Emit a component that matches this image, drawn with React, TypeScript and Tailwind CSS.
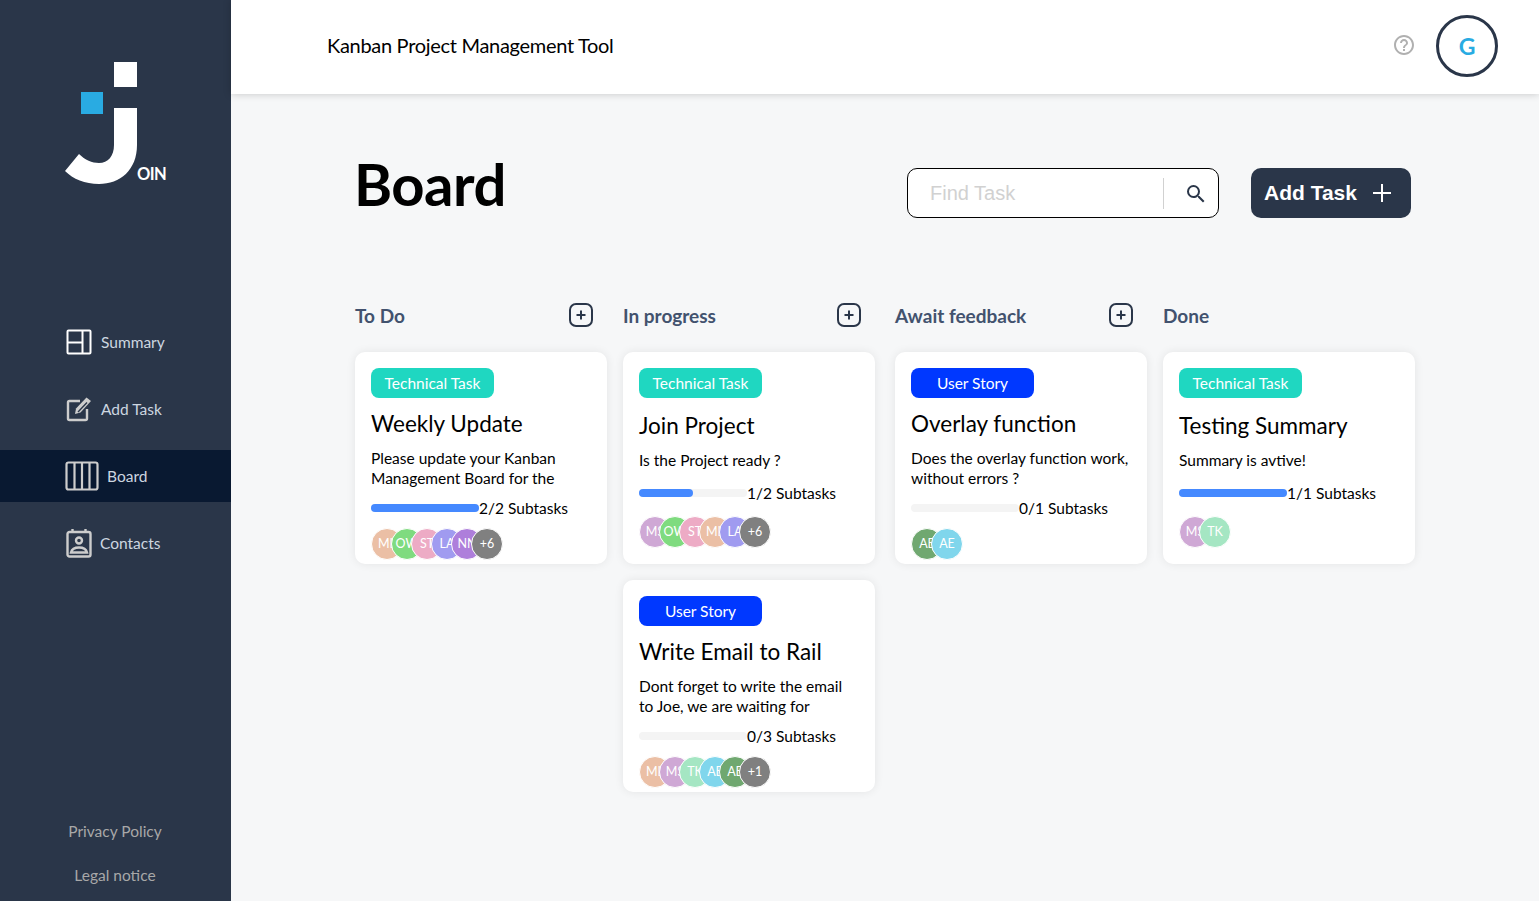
const FONT = "font-['Lato','Noto_Sans',sans-serif]";

type Person = { label: string; color: string };

const ML = { label: "ML", color: "bg-[#ebbfa5]" };
const OW = { label: "OW", color: "bg-[#7fdb7f]" };
const ST = { label: "ST", color: "bg-[#edabc5]" };
const LA = { label: "LA", color: "bg-[#a09bf0]" };
const NN = { label: "NN", color: "bg-[#ae7edb]" };
const MS = { label: "MS", color: "bg-[#cfa8d5]" };
const TK = { label: "TK", color: "bg-[#a5e6c3]" };
const AB = { label: "AE", color: "bg-[#80d6ec]" };
const AG = { label: "AE", color: "bg-[#70a870]" };
const more = (n: number) => ({ label: "+" + n, color: "bg-[#808080]" });

const Logo = () => (
  <svg width="110" height="130" viewBox="60 58 110 130" className="block">
    <rect x="114" y="62" width="23" height="25" fill="#fff" />
    <rect x="81" y="92" width="22" height="22" fill="#29abe2" />
    <path
      d="M114 108H137V145C137 170 120 184 99 184C85 184 73 179 65 171L79 154C85 160 92 163 99 163C108 163 114 156 114 145Z"
      fill="#fff"
    />
  </svg>
);

const SummaryIcon = () => (
  <svg width="26" height="26" viewBox="0 0 26 26" fill="none" stroke="#fff" strokeWidth="2">
    <rect x="1.5" y="1.5" width="23" height="23" rx="1" />
    <path d="M16.5 1.5V24.5M1.5 13.5H16.5" />
  </svg>
);

const AddTaskIcon = () => (
  <svg width="26" height="26" viewBox="0 0 26 26" fill="none" stroke="#cdcdcd" strokeWidth="2.4">
    <path d="M14 5H3.5A1.5 1.5 0 0 0 2 6.5V22.5A1.5 1.5 0 0 0 3.5 24H19.5A1.5 1.5 0 0 0 21 22.5V13" />
    <path d="M9 18L10 12.5L20.5 1.5L25 5L14.5 16.5Z" fill="#cdcdcd" stroke="none" />
    <path d="M11.5 15.5L20.5 6L21.5 7L12.5 16.5Z" fill="#2a3649" stroke="none" />
  </svg>
);

const BoardIcon = () => (
  <svg width="34" height="30" viewBox="0 0 34 30" fill="none" stroke="#cdcdcd" strokeWidth="2.2">
    <rect x="1.5" y="1.5" width="31" height="27" rx="2" />
    <path d="M9.5 1.5V28.5M17 1.5V28.5M24.5 1.5V28.5" />
  </svg>
);

const ContactsIcon = () => (
  <svg width="26" height="30" viewBox="0 0 26 30" fill="none" stroke="#cdcdcd" strokeWidth="2.4">
    <rect x="1.5" y="4" width="23" height="24.5" rx="2" />
    <path d="M6.5 1V4M19.5 1V4" />
    <circle cx="13" cy="12.5" r="3" />
    <path d="M5 24.5C6 20.5 9 19.5 13 19.5S20 20.5 21 24.5Z" />
  </svg>
);

const PlusBox = () => (
  <svg width="24" height="24" viewBox="0 0 24 24" fill="none" stroke="#2a3649" strokeWidth="2" className="shrink-0">
    <rect x="1" y="1" width="22" height="22" rx="6" />
    <path d="M12 7.5V16.5M7.5 12H16.5" />
  </svg>
);

const NavItem = ({ icon, label, left, gap, active }: { icon: React.ReactNode; label: string; left: string; gap: string; active?: boolean }) => (
  <div className={`flex h-[52px] items-center ${left} ${gap} ${active ? "bg-[#091931]" : ""}`}>
    {icon}
    <span className="pt-[2px] text-[15.5px] text-[#cdd6e0]">{label}</span>
  </div>
);

const Sidebar = () => (
  <aside className="flex h-full w-[231px] shrink-0 flex-col bg-[#2a3649]">
    <div className="relative ml-[60px] mt-[58px] h-[130px] w-[110px]">
      <Logo />
      <span className="absolute left-[77px] top-[104px] text-[16.5px] font-bold leading-6 tracking-[-0.6px] text-white">OIN</span>
    </div>
    <nav className="mt-[128px] flex flex-col gap-[15px]">
      <NavItem icon={<SummaryIcon />} label="Summary" left="pl-[66px]" gap="gap-[9px]" />
      <NavItem icon={<AddTaskIcon />} label="Add Task" left="pl-[66px]" gap="gap-[9px]" />
      <NavItem icon={<BoardIcon />} label="Board" left="pl-[65px]" gap="gap-[8px]" active />
      <NavItem icon={<ContactsIcon />} label="Contacts" left="pl-[66px]" gap="gap-[8px]" />
    </nav>
    <div className="mt-auto flex flex-col items-center gap-[22px] pb-[15px] pr-[1px] text-[15.5px] leading-[22px] text-[#a8a8a8]">
      <span>Privacy Policy</span>
      <span>Legal notice</span>
    </div>
  </aside>
);

const Header = () => (
  <header className="flex h-[94px] shrink-0 items-center bg-white pb-[2px] pl-[96px] pr-[41px] shadow-[0_0_8px_rgba(0,0,0,0.2)]">
    <span className="-mt-[2px] text-[20px] tracking-[-0.3px] text-black">Kanban Project Management Tool</span>
    <svg width="24" height="24" viewBox="0 0 24 24" fill="#b0b0b0" className="ml-auto mr-[20px] -mt-[3px]">
      <path d="M11 18h2v-2h-2v2zm1-16C6.48 2 2 6.48 2 12s4.48 10 10 10 10-4.48 10-10S17.52 2 12 2zm0 18c-4.41 0-8-3.59-8-8s3.59-8 8-8 8 3.59 8 8-3.59 8-8 8zm0-14c-2.21 0-4 1.79-4 4h2c0-1.1.9-2 2-2s2 .9 2 2c0 2-3 1.75-3 5h2c0-2.25 3-2.5 3-5 0-2.21-1.79-4-4-4z" />
    </svg>
    <div className="flex h-[62px] w-[62px] items-center justify-center rounded-full border-[3px] border-[#2a3649] text-[23px] font-bold text-[#29abe2]">
      G
    </div>
  </header>
);

const Tag = ({ story }: { story?: boolean }) => (
  <span className={`flex h-[30px] w-[123px] items-center justify-center rounded-lg pt-[2px] text-[15.5px] text-white ${story ? "bg-[#0038ff]" : "bg-[#1fd7c1]"}`}>
    {story ? "User Story" : "Technical Task"}
  </span>
);

const Card = ({ story, short, title, text, done, total, people }: { story?: boolean; short?: boolean; title: string; text: string; done: number; total: number; people: Person[] }) => (
  <div className="flex h-[212px] w-[252px] flex-col items-start rounded-[10px] bg-white px-4 pt-4 shadow-[0_0_10px_rgba(0,0,0,0.08)]">
    <Tag story={story} />
    <h3 className={`text-[22.5px] leading-7 text-black ${short ? "mt-[14px]" : "mt-[12px]"}`}>{title}</h3>
    <p className="mt-[10px] text-[15.5px] leading-5 text-black">{text}</p>
    <div className={`flex h-4 items-center ${short ? "mt-[15px]" : "mt-[12px]"}`}>
      <div className="h-2 w-[108px] rounded-full bg-[#f4f4f4]">
        <div className="h-2 rounded-full bg-[#4589ff]" style={{ width: (done / total) * 100 + "%" }} />
      </div>
      <span className="text-[15.5px] leading-4 text-black">
        {done}/{total} Subtasks
      </span>
    </div>
    <div className={`flex ${short ? "mt-[15px]" : "mt-[12px]"}`}>
      {people.map((p, i) => (
        <div
          key={i}
          className={`flex h-8 w-8 items-center justify-center overflow-hidden rounded-full border border-white text-[12.5px] text-white ${p.color} ${i > 0 ? "-ml-3" : ""}`}
        >
          {p.label}
        </div>
      ))}
    </div>
  </div>
);

const ColumnHead = ({ title, plus = true }: { title: string; plus?: boolean }) => (
  <div className="flex h-6 items-center justify-between pr-[14px]">
    <span className="pt-[2px] text-[19px] font-bold text-[#42526e]">{title}</span>
    {plus && <PlusBox />}
  </div>
);

const Column = ({ title, plus, extra, children }: { title: string; plus?: boolean; extra?: string; children: React.ReactNode }) => (
  <section className={`flex w-[252px] flex-col ${extra ?? ""}`}>
    <ColumnHead title={title} plus={plus} />
    <div className="mt-[25px] flex flex-col gap-4">{children}</div>
  </section>
);

export default function App() {
  return (
    <div className={`flex h-screen overflow-hidden bg-[#f6f7f8] ${FONT}`}>
      <Sidebar />
      <div className="flex min-w-0 flex-1 flex-col">
        <Header />
        <main className="pl-[124px] pr-[128px] pt-[58px]">
          <div className="flex items-start">
            <h1 className="-ml-px mt-[-3px] text-[58px] font-bold leading-[70px] tracking-[-0.5px] text-black">Board</h1>
            <div className="ml-auto mt-[16px] flex items-center gap-8">
              <div className="flex h-[50px] w-[312px] items-center rounded-[10px] border border-black bg-white pl-[22px] pr-[10px]">
                <span className="flex-1 font-['Liberation_Sans',sans-serif] text-[20px] text-[#d1d1d1]">Find Task</span>
                <div className="h-[31px] w-px bg-[#d1d1d1]" />
                <svg width="24" height="24" viewBox="0 0 24 24" fill="#2a3649" className="ml-[20px] mt-px">
                  <path d="M15.5 14h-.79l-.28-.27A6.471 6.471 0 0 0 16 9.5 6.5 6.5 0 1 0 9.5 16c1.61 0 3.09-.59 4.23-1.57l.27.28v.79l5 4.99L20.49 19l-4.99-5zm-6 0C7.01 14 5 11.99 5 9.5S7.01 5 9.5 5 14 7.01 14 9.5 11.99 14 9.5 14z" />
                </svg>
              </div>
              <button className="flex h-[50px] w-[160px] items-center gap-[15px] rounded-[10px] bg-[#2a3649] pl-[13px] font-['Liberation_Sans',sans-serif] text-[21px] font-bold text-white">
                Add Task
                <svg width="20" height="20" viewBox="0 0 20 20" stroke="#fff" strokeWidth="2">
                  <path d="M10 1V19M1 10H19" />
                </svg>
              </button>
            </div>
          </div>
          <div className="mt-[84px] flex items-start gap-4">
            <Column title="To Do">
              <Card title="Weekly Update" text="Please update your Kanban Management Board for the" done={2} total={2} people={[ML, OW, ST, LA, NN, more(6)]} />
            </Column>
            <Column title="In progress" extra="mr-[4px]">
              <Card short title="Join Project" text="Is the Project ready ?" done={1} total={2} people={[MS, OW, ST, ML, LA, more(6)]} />
              <Card story title="Write Email to Rail" text="Dont forget to write the email to Joe, we are waiting for" done={0} total={3} people={[ML, MS, TK, AB, AG, more(1)]} />
            </Column>
            <Column title="Await feedback">
              <Card story title="Overlay function" text="Does the overlay function work, without errors ?" done={0} total={1} people={[AG, AB]} />
            </Column>
            <Column title="Done" plus={false}>
              <Card short title="Testing Summary" text="Summary is avtive!" done={1} total={1} people={[MS, TK]} />
            </Column>
          </div>
        </main>
      </div>
    </div>
  );
}
